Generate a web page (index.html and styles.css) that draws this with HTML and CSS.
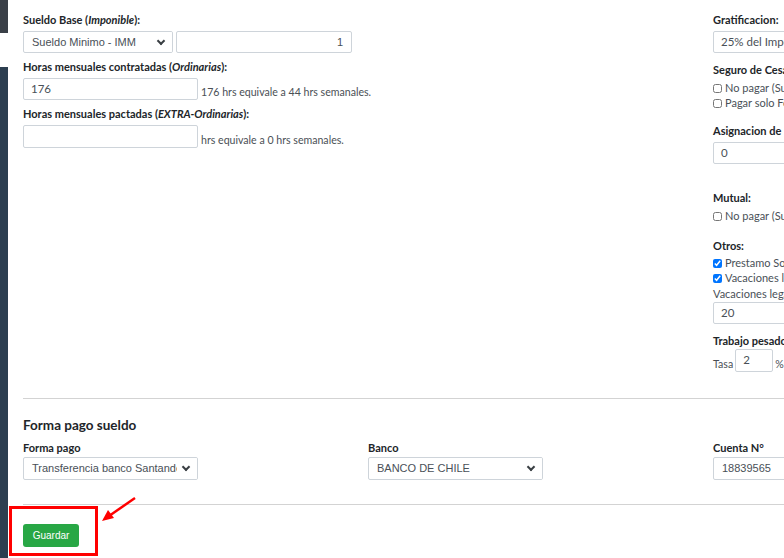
FILE: index.html
```html
<!DOCTYPE html>
<html lang="es">
<head>
  <meta charset="UTF-8" />
  <meta name="viewport" content="width=device-width, initial-scale=1.0"/>
  <title>Ficha trabajador</title>
  <link rel="stylesheet" href="styles.css">
</head>
<body>
  <div class="sidebar">
    <div class="sb-top"></div>
    <div class="sb-gap"></div>
    <div class="sb-main"></div>
  </div>

  <div class="content">
    <div class="row top">
      <div class="col-left">
        <div class="group">
          <label class="lbl">Sueldo Base (<i>Imponible</i>):</label>
          <div class="inline">
            <div class="select w150"><span class="txt">Sueldo Minimo - IMM</span><span class="caret"></span></div>
            <div class="input w176 right">1</div>
          </div>
        </div>
        <div class="group">
          <label class="lbl">Horas mensuales contratadas (<i>Ordinarias</i>):</label>
          <div class="inline">
            <div class="input w175 num">176</div>
            <span class="help">176 hrs equivale a 44 hrs semanales.</span>
          </div>
        </div>
        <div class="group">
          <label class="lbl">Horas mensuales pactadas (<i>EXTRA-Ordinarias</i>):</label>
          <div class="inline">
            <div class="input w175 tall"></div>
            <span class="help">hrs equivale a 0 hrs semanales.</span>
          </div>
        </div>
      </div>

      <div class="col-right">
        <div class="group">
          <label class="lbl">Gratificacion:</label>
          <div class="select wide num">25% del Imponible</div>
        </div>
        <div class="group g-checks">
          <label class="lbl">Seguro de Cesantia:</label>
          <div class="check"><input type="checkbox"> No pagar (Sueldo empresarial)</div>
          <div class="check"><input type="checkbox"> Pagar solo Fondo de Solidario</div>
        </div>
        <div class="group g-asig">
          <label class="lbl">Asignacion de Movilizacion:</label>
          <div class="input wide num">0</div>
        </div>
        <div class="group g-checks g-mutual">
          <label class="lbl">Mutual:</label>
          <div class="check"><input type="checkbox"> No pagar (Sueldo empresarial)</div>
        </div>
        <div class="group g-otros">
          <label class="lbl">Otros:</label>
          <div class="check"><input type="checkbox" checked> Prestamo Solidario</div>
          <div class="check"><input type="checkbox" checked> Vacaciones legales</div>
          <div class="small">Vacaciones legales (dias)</div>
          <div class="input wide num">20</div>
        </div>
        <div class="group last">
          <label class="lbl">Trabajo pesado:</label>
          <div class="inline tasa">
            <span class="help">Tasa</span>
            <div class="input w38 num">2</div>
            <span class="help">%</span>
          </div>
        </div>
      </div>
    </div>

    <hr>

    <h3>Forma pago sueldo</h3>
    <div class="row three">
      <div>
        <label class="lbl">Forma pago</label>
        <div class="select w175"><span class="txt">Transferencia banco Santander</span><span class="caret"></span></div>
      </div>
      <div>
        <label class="lbl">Banco</label>
        <div class="select w175"><span class="txt">BANCO DE CHILE</span><span class="caret"></span></div>
      </div>
      <div>
        <label class="lbl">Cuenta N°</label>
        <div class="input wide">18839565</div>
      </div>
    </div>

    <hr class="last">

    <button class="btn-save">Guardar</button>
  </div>

  <div class="mark"></div>
  <svg class="arrow" width="50" height="34" viewBox="0 0 50 34">
    <line x1="36" y1="4" x2="10" y2="22" stroke="#f00" stroke-width="2.5"/>
    <polygon points="3,27 9,16 15,24" fill="#f00"/>
  </svg>
</body>
</html>
```

FILE: styles.css
```css
body {
  margin: 0;
  font-family: Lato, "Open Sans", sans-serif;
  font-size: 11px;
  color: #212529;
  background: #fff;
  display: flex;
  width: 784px;
  height: 558px;
  overflow: hidden;
}

.sidebar {
  width: 8px;
  flex: none;
  display: flex;
  flex-direction: column;
}
.sb-top { height: 33px; background: #3a4047; }
.sb-gap { height: 34px; background: #fff; }
.sb-main { flex: 1; background: #2c3e50; }

.content {
  padding: 13px 0 0 15px;
  width: 1100px;
  flex: none;
}

.row.top {
  display: grid;
  grid-template-columns: 690px 345px;
}

.lbl {
  display: block;
  font-weight: bold;
  height: 14px;
  line-height: 14px;
  margin-bottom: 4px;
}
.lbl i { font-weight: bold; }

.group { margin-bottom: 10px; }
.col-left .group { margin-bottom: 7px; }
.group.last { margin-bottom: 0; }
.group.last .lbl { margin-bottom: 1px; }
.g-checks { margin-bottom: 14px; }
.g-checks .lbl { margin-bottom: 3px; }
.g-asig { margin-bottom: 27px; }
.g-mutual { margin-bottom: 16px; }
.g-otros .lbl { margin-bottom: 2px; }

.inline {
  display: flex;
  align-items: flex-end;
  gap: 3px;
}

.input, .select {
  box-sizing: border-box;
  height: 22px;
  border: 1px solid #ced4da;
  border-radius: 2px;
  padding: 0 8px;
  line-height: 20px;
  color: #495057;
  font-family: "Liberation Sans", Arial, sans-serif;
  font-size: 11px;
  white-space: nowrap;
  overflow: hidden;
  position: relative;
  background: #fff;
}
.num { font-family: Lato, sans-serif; font-size: 11.5px; padding-left: 7px; }
.right { text-align: right; }
.tall { height: 23px; line-height: 21px; }

.caret {
  position: absolute;
  right: 0;
  top: 0;
  bottom: 0;
  width: 20px;
  background: #fff;
}
.caret::after {
  content: "";
  position: absolute;
  left: 6px;
  top: 6px;
  width: 4px;
  height: 4px;
  border-right: 2px solid #3a3f44;
  border-bottom: 2px solid #3a3f44;
  transform: rotate(45deg);
}

.w150 { width: 150px; }
.w176 { width: 176px; }
.w175 { width: 175px; }
.w38 { width: 38px; height: 23px; }
.wide { width: 200px; }

.help {
  font-size: 10.6px;
  line-height: 14px;
  color: #4a4f55;
  padding-bottom: 1px;
}
.tasa { gap: 2px; }

.check {
  display: flex;
  align-items: center;
  gap: 3px;
  height: 15px;
  white-space: nowrap;
  color: #495057;
}
.check input {
  margin: 2px 0 0;
  width: 9px;
  height: 9px;
}
.small {
  line-height: 15px;
  color: #495057;
  margin: 1px 0 1px;
  white-space: nowrap;
}

hr {
  border: 0;
  border-top: 1px solid #d3d3d3;
  margin: 26px 0 18px 0;
}
hr.last { margin: 24px 0 19px 0; }

h3 {
  margin: 0 0 8px;
  font-size: 13.5px;
  line-height: 16px;
}

.row.three {
  display: grid;
  grid-template-columns: 345px 345px 345px;
}
.row.three .lbl { margin-bottom: 2px; }
.row.three .select, .row.three .input { height: 23px; line-height: 21px; }

.btn-save {
  background: #28a745;
  color: #fff;
  border: 0;
  border-radius: 3px;
  width: 56px;
  height: 23px;
  font-family: "Liberation Sans", Arial, sans-serif;
  font-size: 10px;
  padding: 0;
}

.mark {
  position: absolute;
  left: 9px;
  top: 506px;
  width: 83px;
  height: 44px;
  border: 3px solid #f00;
}
.arrow {
  position: absolute;
  left: 99px;
  top: 494px;
}
```
